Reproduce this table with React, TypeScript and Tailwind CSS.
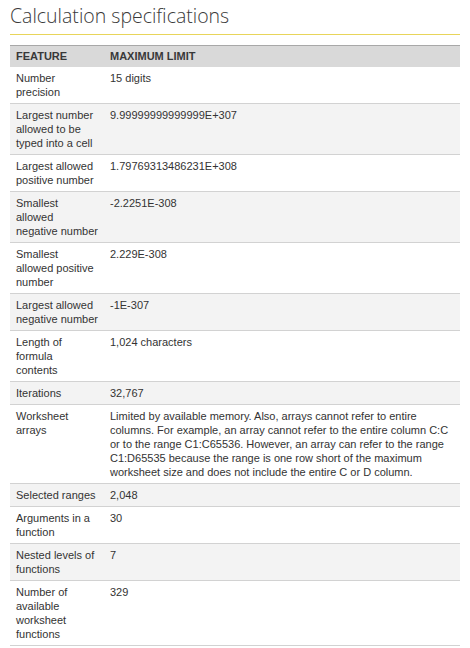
import React from "react";

const rows: [string[], string][] = [
  [["Number", "precision"], "15 digits"],
  [["Largest number", "allowed to be", "typed into a cell"], "9.99999999999999E+307"],
  [["Largest allowed", "positive number"], "1.79769313486231E+308"],
  [["Smallest", "allowed", "negative number"], "-2.2251E-308"],
  [["Smallest", "allowed positive", "number"], "2.229E-308"],
  [["Largest allowed", "negative number"], "-1E-307"],
  [["Length of", "formula", "contents"], "1,024 characters"],
  [["Iterations"], "32,767"],
  [
    ["Worksheet", "arrays"],
    "Limited by available memory. Also, arrays cannot refer to entire columns. For example, an array cannot refer to the entire column C:C or to the range C1:C65536. However, an array can refer to the range C1:D65535 because the range is one row short of the maximum worksheet size and does not include the entire C or D column.",
  ],
  [["Selected ranges"], "2,048"],
  [["Arguments in a", "function"], "30"],
  [["Nested levels of", "functions"], "7"],
  [["Number of", "available", "worksheet", "functions"], "329"],
];

export default function App() {
  return (
    <div className="w-[470px] h-[648px] bg-white px-[10px] overflow-hidden">
      <h1
        className="pt-[3px] h-[35px] text-[19.5px] leading-[26px] text-[#3a3a3a] font-light border-b border-[#e8d55a]"
        style={{ fontFamily: '"Open Sans", "Noto Sans", sans-serif' }}
      >
        Calculation specifications
      </h1>
      <div
        className="mt-[10px] border-t border-[#a8a8a8] text-[#333]"
        style={{ fontFamily: '"Liberation Sans", Arial, sans-serif' }}
      >
        <div className="flex bg-[#d9d9d9] h-[21px] items-center text-[11px] font-bold text-[#383838]">
          <div className="w-[94px] pl-[6px]">FEATURE</div>
          <div className="pl-[6px]">MAXIMUM LIMIT</div>
        </div>
        {rows.map(([f, v], i) => (
          <div
            key={i}
            className={`flex border-b border-[#d2d2d2] text-[11px] leading-[14px] ${
              i % 2 === 1 ? "bg-[#f3f3f3]" : "bg-white"
            }`}
          >
            <div className="w-[94px] shrink-0 pl-[6px] pr-[2px] pt-[4px] pb-[4px] whitespace-nowrap">
              {f.map((line, j) => (
                <div key={j}>{line}</div>
              ))}
            </div>
            <div className="w-[350px] pl-[6px] pr-[2px] pt-[4px] pb-[4px]">{v}</div>
          </div>
        ))}
      </div>
    </div>
  );
}
